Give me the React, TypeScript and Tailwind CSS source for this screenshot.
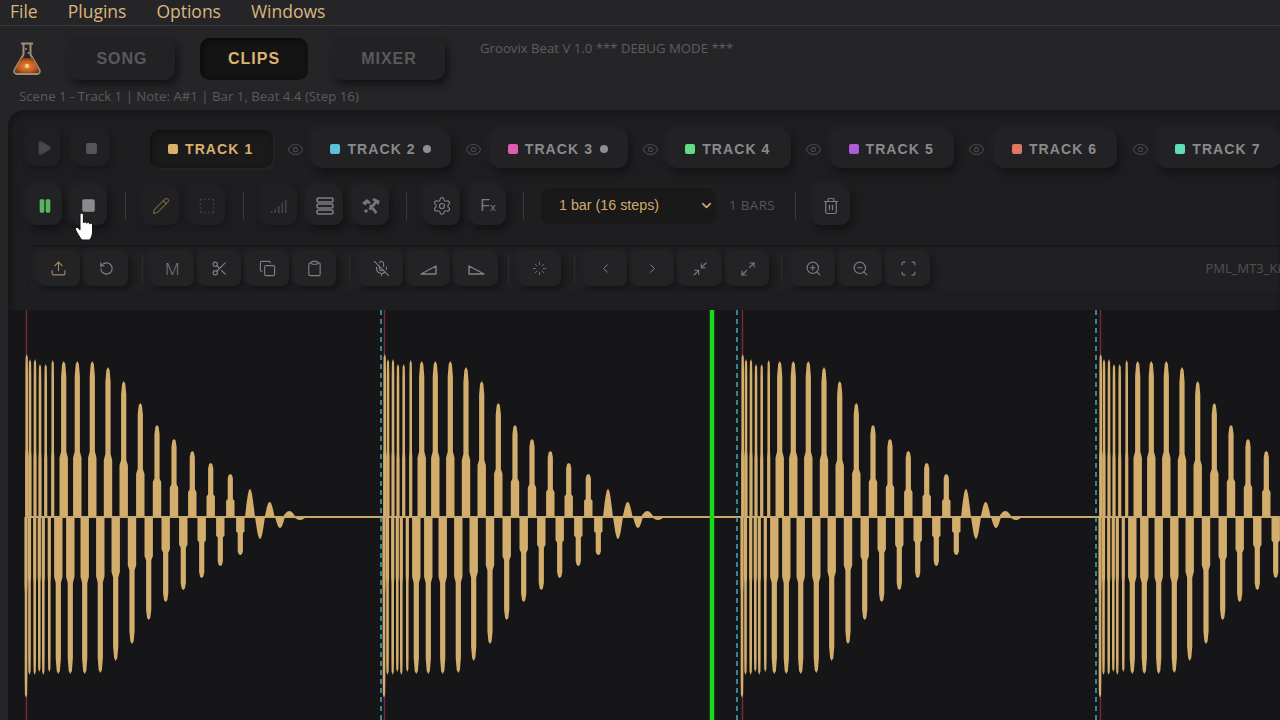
import React from "react";
import {
  ChevronDown, ChevronLeft, ChevronRight, Clipboard, Copy, Eye, Loader, Maximize2, MicOff, Minimize2, Pause, Pencil, Play,
  RotateCcw, Scan, Scissors, Settings, Square, SquareDashed, Trash2, Upload, ZoomIn, ZoomOut,
} from "lucide-react";

const sans = "font-['Liberation_Sans',Arial,sans-serif]";
const ui = "font-['Open_Sans','Noto_Sans',sans-serif]";
const raised = "bg-[#222224] shadow-[3px_5px_7px_#141416,-2px_-2px_6px_#262629]";
const flat = "bg-[#201f21] shadow-[2px_3px_6px_#18181a,-2px_-2px_5px_#242427]";

// offset from the start of the hit, amplitude
const upPeaks = [
  [0.7, 163], [4, 158], [9, 158], [14, 153], [19.7, 153], [26.7, 157], [37.7, 156], [51.3, 156], [66.3, 156], [82, 150],
  [97.7, 136], [114.3, 114], [131, 92], [148, 78], [166.3, 66], [184.7, 54], [204.3, 43], [224, 28], [243.7, 15], [263.3, 6], [282, 1],
];
const downPeaks = [
  [0, 181], [3.5, 158], [8.7, 158], [13.3, 155], [17.3, 158], [23.3, 155], [32.3, 157], [44.3, 157], [58.7, 157], [74.3, 156],
  [89.7, 144], [106, 127], [122.7, 103], [139.7, 85], [157.3, 73], [175.7, 61], [194.3, 49], [214.3, 38], [234, 22], [254, 11], [274, 3],
];

const peakPath = (x: number, amp: number, dir: number, i: number) => {
  const y = (k: number) => (-dir * amp * k).toFixed(1);
  if (amp < 30) {
    const b = amp < 8 ? 13 : 10;
    return `M${x - b / 2} 0C${x - b / 3} ${y(0.5)} ${x - b / 5} ${y(1)} ${x} ${y(1)}C${x + b / 5} ${y(1)} ${x + b / 3} ${y(0.5)} ${x + b / 2} 0Z`;
  }
  const w = i < 6 ? 3.2 : 8.4;
  const n = i < 6 ? 2.6 : 5.2;
  const t = i < 6 ? 2.2 : 3.2;
  return `M${x - w / 2} 0L${x - w / 2} ${y(0.38)}L${x - n / 2} ${y(0.42)}L${x - n / 2} ${y(0.9)}L${x - t / 2} ${y(0.98)}L${x} ${y(1)}L${x + t / 2} ${y(0.98)}L${x + n / 2} ${y(0.9)}L${x + n / 2} ${y(0.42)}L${x + w / 2} ${y(0.38)}L${x + w / 2} 0Z`;
};

const hitPath =
  upPeaks.map(([x, a], i) => peakPath(x, a, 1, i)).join("") + downPeaks.map(([x, a], i) => peakPath(x, a, -1, i)).join("");

function Waveform() {
  const starts = [18, 376, 734, 1092];
  const cyan = [373, 729, 1088];
  return (
    <svg width="1272" height="410" viewBox="0 0 1272 410" className="block">
      {starts.map((x) => (
        <g key={x}>
          <line x1={x + 0.5} y1="0" x2={x + 0.5} y2="410" stroke="#6e2a3a" strokeWidth="1.5" />
          <path d={hitPath} transform={`translate(${x} 207)`} fill="#d2ad6c" />
          <rect x={x} y="206" width="358" height="2" fill="#c9a86f" />
        </g>
      ))}
      {cyan.map((x) => (
        <line key={x} x1={x} y1="0" x2={x} y2="410" stroke="#38aebf" strokeWidth="1.5" strokeDasharray="5 4" />
      ))}
      <rect x="701" y="0" width="6" height="410" fill="#16a516" opacity="0.3" />
      <rect x="702" y="0" width="4" height="410" fill="#1ad91a" />
    </svg>
  );
}

function Flask() {
  return (
    <svg width="32" height="36" viewBox="0 0 32 36" fill="none">
      <defs>
        <radialGradient id="liquid" cx="0.5" cy="0.55" r="0.6">
          <stop offset="0" stopColor="#f08a3c" />
          <stop offset="0.6" stopColor="#c25a20" />
          <stop offset="1" stopColor="#6e3014" />
        </radialGradient>
      </defs>
      <path d="M10 2.500h12M12.500 2.500v11L3.500 29c-1 2 .5 4 2.500 4h20c2 0 3.500-2 2.500-4l-9-15.500v-11" stroke="#9c8f7c" strokeWidth="2" strokeLinejoin="round" />
      <path d="M10.500 17h11L28 29c.8 1.600-.3 3-2 3H6c-1.700 0-2.800-1.400-2-3z" fill="url(#liquid)" />
      <circle cx="16" cy="25" r="2.200" fill="#f2c68c" />
      <circle cx="15" cy="8" r="1" fill="#9c8f7c" />
      <circle cx="17.500" cy="12" r="1" fill="#9c8f7c" />
    </svg>
  );
}

function BarsIcon() {
  return (
    <svg width="18" height="18" viewBox="0 0 18 18" fill="#454547">
      <rect x="1" y="14" width="1.600" height="2" />
      <rect x="4.500" y="12" width="1.600" height="4" />
      <rect x="8" y="9" width="1.600" height="7" />
      <rect x="11.500" y="6" width="1.600" height="10" />
      <rect x="15" y="3" width="1.600" height="13" />
    </svg>
  );
}

function StackIcon() {
  return (
    <svg width="20" height="20" viewBox="0 0 20 20" fill="none" stroke="#7e7e80" strokeWidth="1.600">
      <rect x="2" y="2" width="16" height="4" rx="1.500" />
      <rect x="2" y="8" width="16" height="4" rx="1.500" />
      <rect x="2" y="14" width="16" height="4" rx="1.500" />
    </svg>
  );
}

function HammersIcon() {
  return (
    <svg width="20" height="20" viewBox="0 0 20 20" fill="#767678">
      <path d="M1 7l5-4 2.500 2 1.500 1.500-1.800 1.800-1.500-1.300-2.200 2.500z" />
      <path d="M19 5l-6-3-2 2 2.500 1.500-6 7 2 2 6-7 1.800 1.500z" />
      <path d="M8 10l2-1.800 6.500 8-2 1.800z" />
      <circle cx="5" cy="15" r="1.800" />
    </svg>
  );
}

function FadeIn() {
  return (
    <svg width="17" height="12" viewBox="0 0 17 12" fill="none" stroke="#828284" strokeWidth="1.400" strokeLinejoin="round">
      <path d="M1 11h15V3z" />
    </svg>
  );
}

function FadeOut() {
  return (
    <svg width="17" height="12" viewBox="0 0 17 12" fill="none" stroke="#828284" strokeWidth="1.400" strokeLinejoin="round">
      <path d="M16 11H1V3z" />
    </svg>
  );
}

function HandCursor() {
  return (
    <svg width="24" height="30" viewBox="0 0 24 30" className="absolute left-[73px] top-[212px]">
      <path
        d="M7 3c0-2.400 3.400-2.400 3.400 0v8c.4-1.600 3-1.500 3.200.3.400-1.400 2.900-1.300 3.100.6.600-1.200 2.800-.8 2.800 1V20c0 4-2 7-3 8H9c-1.500-1.500-3-4-5-7.500-1.700-2.500-1.800-4.500-.8-5 1.200-.6 2.500.6 3.800 2.500z"
        fill="#ffffff"
        stroke="#111111"
        strokeWidth="1"
      />
    </svg>
  );
}

const IconBtn: React.FC<{ children: React.ReactNode; dim?: boolean; className?: string }> = ({ children, dim, className }) => (
  <div className={`flex h-[39px] w-[36px] shrink-0 items-center justify-center rounded-[9px] ${dim ? flat : raised} ${className ?? ""}`}>{children}</div>
);

const ToolBtn: React.FC<{ children: React.ReactNode }> = ({ children }) => (
  <div className="flex h-[34px] w-[42.5px] shrink-0 items-center justify-center rounded-[7px] bg-[#232325] shadow-[3px_4px_6px_#151517,-2px_-2px_4px_#272729]">{children}</div>
);

const tracks = [
  { name: "TRACK 1", color: "bg-[#dbb069]", active: true },
  { name: "TRACK 2", color: "bg-[#5cc0dc]", dot: true },
  { name: "TRACK 3", color: "bg-[#dd5cb4]", dot: true },
  { name: "TRACK 4", color: "bg-[#62dc84]" },
  { name: "TRACK 5", color: "bg-[#ae5cdc]" },
  { name: "TRACK 6", color: "bg-[#e27564]" },
  { name: "TRACK 7", color: "bg-[#62dcb8]" },
];

function TrackTabs() {
  return (
    <>
      {tracks.map((t, i) => (
        <React.Fragment key={t.name}>
          {i > 0 && (
            <div className={`flex shrink-0 justify-center pl-[6px] ${i >= 4 ? "w-[40px]" : "w-[39px]"}`}>
              <Eye size={17} color="#47474a" strokeWidth={1.5} />
            </div>
          )}
          <div
            className={`flex h-[38px] w-fit shrink-0 items-center rounded-[10px] pl-[18px] pr-[20px] ${
              t.active ? "bg-[#1b1a1b] shadow-[inset_2px_2px_5px_#111112,2px_2px_3px_#262629]" : raised
            }`}
          >
            <span className={`h-[10px] w-[10px] rounded-[2px] ${t.color}`} />
            <span className={`ml-[7px] text-[14px] font-bold tracking-[1.1px] ${sans} ${t.active ? "text-[#d8b06c]" : "text-[#8a8a8c]"}`}>{t.name}</span>
            {t.dot && <span className="ml-[7px] h-[8px] w-[8px] rounded-full bg-[#8f8f91]" />}
          </div>
        </React.Fragment>
      ))}
    </>
  );
}

const RowSep = () => <div className="mx-[17px] h-[28px] w-px shrink-0 bg-[#3a3a3c]" />;

export default function App() {
  const ic = { size: 18, color: "#7e7e80", strokeWidth: 1.6 };
  return (
    <div className={`relative flex h-screen w-[1280px] flex-col overflow-hidden bg-[#252527] ${ui}`}>
      {/* menu */}
      <div className="flex h-[26px] shrink-0 items-center gap-[30px] border-b border-[#3b3b3d] pb-[2px] pl-[10px] text-[17.5px] text-[#d9b67c]">
        <span>File</span>
        <span>Plugins</span>
        <span>Options</span>
        <span>Windows</span>
      </div>

      {/* header */}
      <div className="h-[84px] shrink-0">
        <div className="flex h-[60px] pt-[12px]">
          <div className="ml-[11px] mt-[3px] w-[32px]">
            <Flask />
          </div>
          {[
            { label: "SONG", w: "ml-[26px] w-[106px]" },
            { label: "CLIPS", w: "ml-[25px] w-[108px]", active: true },
            { label: "MIXER", w: "ml-[25px] w-[112px]" },
          ].map((t) => (
            <div
              key={t.label}
              className={`flex h-[42px] items-center justify-center rounded-[10px] text-[16px] font-bold tracking-[1px] ${sans} ${t.w} ${
                t.active ? "bg-[#141414] text-[#dcb271] shadow-[inset_2px_2px_6px_#0a0a0a]" : `${raised} text-[#59595c]`
              }`}
            >
              {t.label}
            </div>
          ))}
          <div className="ml-[35px] text-[13.2px] leading-[20px] text-[#5d5d60]">Groovix Beat V 1.0 *** DEBUG MODE ***</div>
        </div>
        <div className="pl-[19px] text-[13.25px] leading-[20px] text-[#5b5b5e]">Scene 1 - Track 1 | Note: A#1 | Bar 1, Beat 4.4 (Step 16)</div>
      </div>

      {/* panel */}
      <div className="ml-[8px] flex min-h-0 flex-1 flex-col rounded-tl-[16px] bg-[#1e1e20] shadow-[inset_3px_3px_6px_#161618]">
        <div className="flex pl-[19px] pt-[20px]">
          <IconBtn dim className="!h-[36px] !w-[33px]">
            <Play size={16} color="#48484a" fill="#48484a" />
          </IconBtn>
          <IconBtn dim className="ml-[13px] !h-[36px]">
            <Square size={13} color="#565658" fill="#565658" />
          </IconBtn>
          <div className="ml-[41px] flex items-center">
            <TrackTabs />
          </div>
        </div>

        <div className="mt-[18px] flex items-center pl-[19px]">
          <IconBtn className="!w-[35px]">
            <Pause size={16} color="#59b35f" fill="#59b35f" />
          </IconBtn>
          <IconBtn className="ml-[9px]">
            <Square size={15} color="#8b8b8d" fill="#8b8b8d" className="-ml-[2px]" />
          </IconBtn>
          <div className="ml-[18px] mr-[17px] h-[28px] w-px shrink-0 bg-[#3a3a3c]" />
          <IconBtn dim>
            <Pencil size={18} color="#6f6242" strokeWidth={1.6} />
          </IconBtn>
          <IconBtn dim className="ml-[10px] mr-px">
            <SquareDashed size={18} color="#49494b" strokeWidth={1.5} />
          </IconBtn>
          <RowSep />
          <IconBtn dim>
            <BarsIcon />
          </IconBtn>
          <IconBtn className="ml-[10px]">
            <StackIcon />
          </IconBtn>
          <IconBtn className="ml-[10px]">
            <HammersIcon />
          </IconBtn>
          <RowSep />
          <IconBtn>
            <Settings {...ic} size={20} strokeWidth={1.4} />
          </IconBtn>
          <IconBtn className="ml-[10px]">
            <span className={`text-[16px] text-[#7a7a7c] ${sans}`}>
              F<span className="text-[11px]">x</span>
            </span>
          </IconBtn>
          <RowSep />
          <div className={`flex h-[36px] w-[175px] shrink-0 items-center justify-between rounded-[8px] bg-[#19191a] pl-[18px] pr-[2px] text-[14.3px] text-[#d3aa69] ${sans}`}>
            <span className="pt-px">1 bar (16 steps)</span>
            <ChevronDown size={15} color="#d3aa69" strokeWidth={2.6} />
          </div>
          <span className="ml-[13px] w-[47px] shrink-0 whitespace-nowrap text-[13.5px] tracking-[0.3px] text-[#565659]">1 BARS</span>
          <div className="ml-[19px] mr-[16px] h-[28px] w-px shrink-0 bg-[#3a3a3c]" />
          <IconBtn className="!w-[38px]">
            <Trash2 {...ic} />
          </IconBtn>
        </div>

        <div className="ml-[20px] mt-[20px] flex h-[47px] shrink-0 items-center overflow-hidden rounded-l-[8px] bg-[#202022] pl-[9.5px] shadow-[inset_0_2px_3px_#171719]">
          <div className="flex gap-[5px]">
            <ToolBtn>
              <Upload size={17} color="#a08c63" strokeWidth={1.6} />
            </ToolBtn>
            <ToolBtn>
              <RotateCcw size={15} color="#7e7e80" strokeWidth={1.8} />
            </ToolBtn>
          </div>
          <div className="ml-[14px] mr-[8.5px] h-[28px] w-px shrink-0 bg-[#2c2c2e]" />
          <div className="flex gap-[5px]">
            <ToolBtn>
              <span className={`text-[17px] font-light text-[#828284] ${ui}`}>M</span>
            </ToolBtn>
            <ToolBtn>
              <Scissors {...ic} size={17} />
            </ToolBtn>
            <ToolBtn>
              <Copy {...ic} size={17} />
            </ToolBtn>
            <ToolBtn>
              <Clipboard {...ic} size={17} />
            </ToolBtn>
          </div>
          <div className="ml-[13px] mr-[10px] h-[28px] w-px shrink-0 bg-[#2c2c2e]" />
          <div className="flex gap-[5px]">
            <ToolBtn>
              <MicOff {...ic} size={17} />
            </ToolBtn>
            <ToolBtn>
              <FadeIn />
            </ToolBtn>
            <ToolBtn>
              <FadeOut />
            </ToolBtn>
          </div>
          <div className="ml-[10px] mr-[10px] h-[28px] w-px shrink-0 bg-[#2c2c2e]" />
          <ToolBtn>
            <Loader size={15} color="#6e6e70" strokeWidth={1.5} />
          </ToolBtn>
          <div className="ml-[13px] mr-[9px] h-[28px] w-px shrink-0 bg-[#2c2c2e]" />
          <div className="flex gap-[5px]">
            <ToolBtn>
              <ChevronLeft {...ic} size={15} />
            </ToolBtn>
            <ToolBtn>
              <ChevronRight {...ic} size={15} />
            </ToolBtn>
            <ToolBtn>
              <Minimize2 {...ic} size={16} />
            </ToolBtn>
            <ToolBtn>
              <Maximize2 {...ic} size={16} />
            </ToolBtn>
          </div>
          <div className="ml-[12px] mr-[10px] h-[28px] w-px shrink-0 bg-[#2c2c2e]" />
          <div className="flex gap-[5px]">
            <ToolBtn>
              <ZoomIn {...ic} size={17} />
            </ToolBtn>
            <ToolBtn>
              <ZoomOut {...ic} size={17} />
            </ToolBtn>
            <ToolBtn>
              <Scan {...ic} size={17} />
            </ToolBtn>
          </div>
          <span className="ml-[276px] whitespace-nowrap text-[13px] text-[#505053]">PML_MT3_Kick_01.wav</span>
        </div>

        <div className="mt-[18px] min-h-0 flex-1 bg-[#161518]">
          <Waveform />
        </div>
      </div>

      <HandCursor />
    </div>
  );
}
